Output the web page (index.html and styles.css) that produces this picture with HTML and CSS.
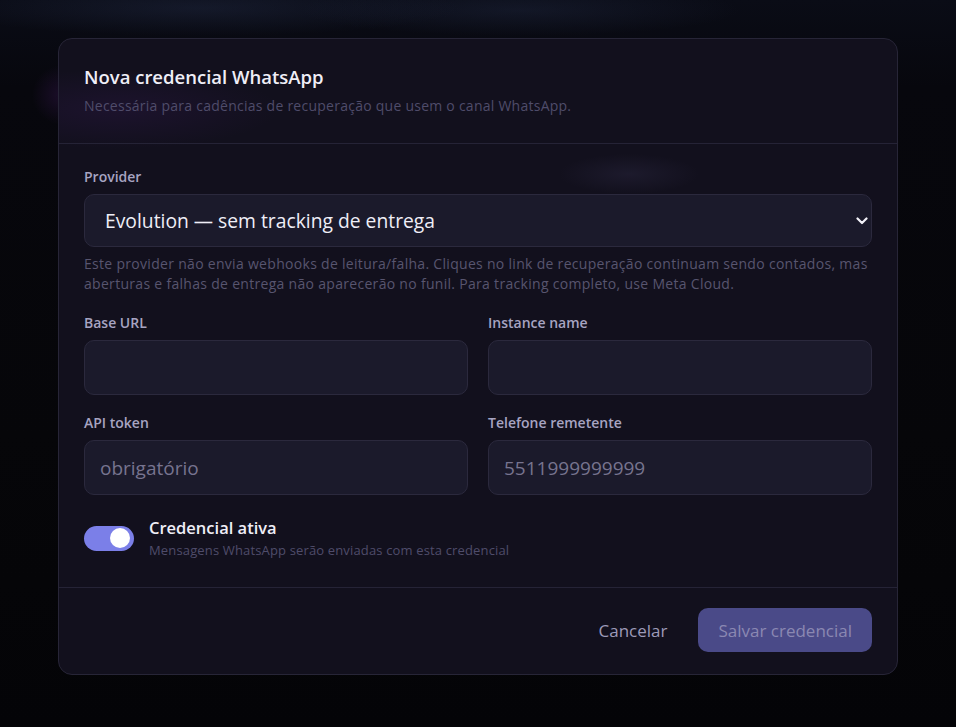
FILE: index.html
```html
<!DOCTYPE html>
<html lang="pt-BR">
<head>
<meta charset="utf-8">
<title>Nova credencial WhatsApp</title>
<link rel="stylesheet" href="styles.css">
</head>
<body>
<div class="backdrop">
  <div class="modal" role="dialog" aria-labelledby="modal-title">
    <header class="modal-header">
      <h2 id="modal-title" class="modal-title">Nova credencial WhatsApp</h2>
      <p class="modal-subtitle">Necessária para cadências de recuperação que usem o canal WhatsApp.</p>
    </header>

    <div class="modal-body">
      <div class="field">
        <label class="field-label" for="provider">Provider</label>
        <div class="select-wrap">
          <select id="provider" class="control select">
            <option>Evolution — sem tracking de entrega</option>
            <option>Meta Cloud</option>
          </select>
          <svg class="select-chevron" width="12" height="8" viewBox="0 0 12 8" aria-hidden="true">
            <path d="M1.5 1.5 L6 6 L10.5 1.5" fill="none" stroke="#f2f1f8" stroke-width="2.2" stroke-linecap="round" stroke-linejoin="round"/>
          </svg>
        </div>
        <p class="field-help">Este provider não envia webhooks de leitura/falha. Cliques no link de recuperação continuam sendo contados, mas aberturas e falhas de entrega não aparecerão no funil. Para tracking completo, use Meta Cloud.</p>
      </div>

      <div class="field-grid">
        <div class="field">
          <label class="field-label" for="base-url">Base URL</label>
          <input id="base-url" class="control" type="text">
        </div>
        <div class="field">
          <label class="field-label" for="instance">Instance name</label>
          <input id="instance" class="control" type="text">
        </div>
        <div class="field">
          <label class="field-label" for="token">API token</label>
          <input id="token" class="control" type="text" placeholder="obrigatório">
        </div>
        <div class="field">
          <label class="field-label" for="phone">Telefone remetente</label>
          <input id="phone" class="control" type="text" placeholder="5511999999999">
        </div>
      </div>

      <div class="switch-row">
        <span class="switch is-on" role="switch" aria-checked="true"><span class="switch-knob"></span></span>
        <div class="switch-text">
          <div class="switch-title">Credencial ativa</div>
          <div class="switch-desc">Mensagens WhatsApp serão enviadas com esta credencial</div>
        </div>
      </div>
    </div>

    <footer class="modal-footer">
      <button class="btn btn-ghost" type="button">Cancelar</button>
      <button class="btn btn-primary" type="button" disabled>Salvar credencial</button>
    </footer>
  </div>
</div>
</body>
</html>
```

FILE: styles.css
```css
* {
  box-sizing: border-box;
}

html, body {
  margin: 0;
  height: 100%;
}

body {
  font-family: "Open Sans", "Noto Sans", "Liberation Sans", sans-serif;
  background-color: #050509;
  color: #e9e8f3;
}

/* dimmed, blurred app behind the dialog */
.backdrop {
  min-height: 100%;
  padding-top: 38px;
  background:
    radial-gradient(ellipse 30px 30px at 62px 95px, rgba(110, 40, 160, 0.2), transparent 100%),
    radial-gradient(ellipse 260px 28px at 200px 8px, rgba(40, 50, 80, 0.35), transparent 100%),
    radial-gradient(ellipse 220px 26px at 520px 10px, rgba(40, 50, 80, 0.3), transparent 100%),
    linear-gradient(180deg, #0a0c16 0%, #07070d 12%, #060609 60%, #040407 100%);
}

.modal {
  width: 840px;
  margin: 0 auto;
  border: 1px solid #272537;
  border-radius: 14px;
  background:
    radial-gradient(ellipse 70px 20px at 570px 135px, rgba(60, 56, 90, 0.25), transparent 100%),
    radial-gradient(ellipse 160px 40px at 60px 70px, rgba(70, 30, 110, 0.2), transparent 100%),
    #12101d;
  overflow: hidden;
}

.modal-header {
  padding: 26px 25px 28px;
  border-bottom: 1px solid #252336;
}

.modal-title {
  margin: 0;
  font-size: 18.5px;
  line-height: 24px;
  font-weight: 600;
  color: #efeef7;
}

.modal-subtitle {
  margin: 8px 0 0;
  font-size: 14px;
  line-height: 18px;
  letter-spacing: 0.25px;
  color: #4f4c6a;
}

.modal-body {
  padding: 23px 25px 28px;
  display: flex;
  flex-direction: column;
  gap: 19px;
}

.field {
  display: flex;
  flex-direction: column;
}

.field-label {
  font-size: 14px;
  line-height: 20px;
  font-weight: 600;
  color: #a7a4c2;
  margin-bottom: 7px;
}

.field-grid {
  display: grid;
  grid-template-columns: 1fr 1fr;
  column-gap: 20px;
  row-gap: 18px;
}

.control {
  width: 100%;
  height: 55px;
  padding: 0 15px;
  font-family: inherit;
  font-size: 19px;
  color: #e9e8f3;
  background: #1b1a2b;
  border: 1px solid #2b293d;
  border-radius: 10px;
  outline: none;
}

.control::placeholder {
  color: #77748f;
}

.select-wrap {
  position: relative;
}

.select {
  height: 53px;
  padding: 0 44px 0 20px;
  font-size: 19.3px;
  appearance: none;
  -webkit-appearance: none;
  background: #1b1a2b;
  color: #efeef7;
}

.select-chevron {
  position: absolute;
  right: 4px;
  top: 23px;
  pointer-events: none;
}

.field-help {
  margin: 7px 0 0;
  font-size: 14px;
  line-height: 20px;
  letter-spacing: 0.3px;
  color: #58556f;
}

.switch-row {
  display: flex;
  align-items: center;
  gap: 15px;
  margin-top: 3px;
}

.switch {
  flex: none;
  width: 50px;
  height: 25px;
  border-radius: 13px;
  background: #3a3850;
  display: flex;
  align-items: center;
  padding: 0 4px;
}

.switch.is-on {
  background: #7b7fe8;
  justify-content: flex-end;
}

.switch-knob {
  width: 20px;
  height: 20px;
  border-radius: 50%;
  background: #ffffff;
}

.switch-title {
  font-size: 16.5px;
  line-height: 22px;
  font-weight: 600;
  color: #efeef7;
}

.switch-desc {
  margin-top: 2px;
  font-size: 13px;
  line-height: 18px;
  letter-spacing: 0.15px;
  color: #4f4c6a;
}

.modal-footer {
  border-top: 1px solid #252336;
  padding: 20px 25px 22px;
  display: flex;
  justify-content: flex-end;
  align-items: center;
  gap: 20px;
}

.btn {
  font-family: inherit;
  font-size: 17px;
  height: 44px;
  border-radius: 10px;
  border: none;
  cursor: pointer;
}

.btn-ghost {
  background: transparent;
  color: #9d9ab8;
  padding: 0 11px;
}

.btn-primary {
  background: #4a4a88;
  color: #8a88b2;
  padding: 0 20px;
}
```
